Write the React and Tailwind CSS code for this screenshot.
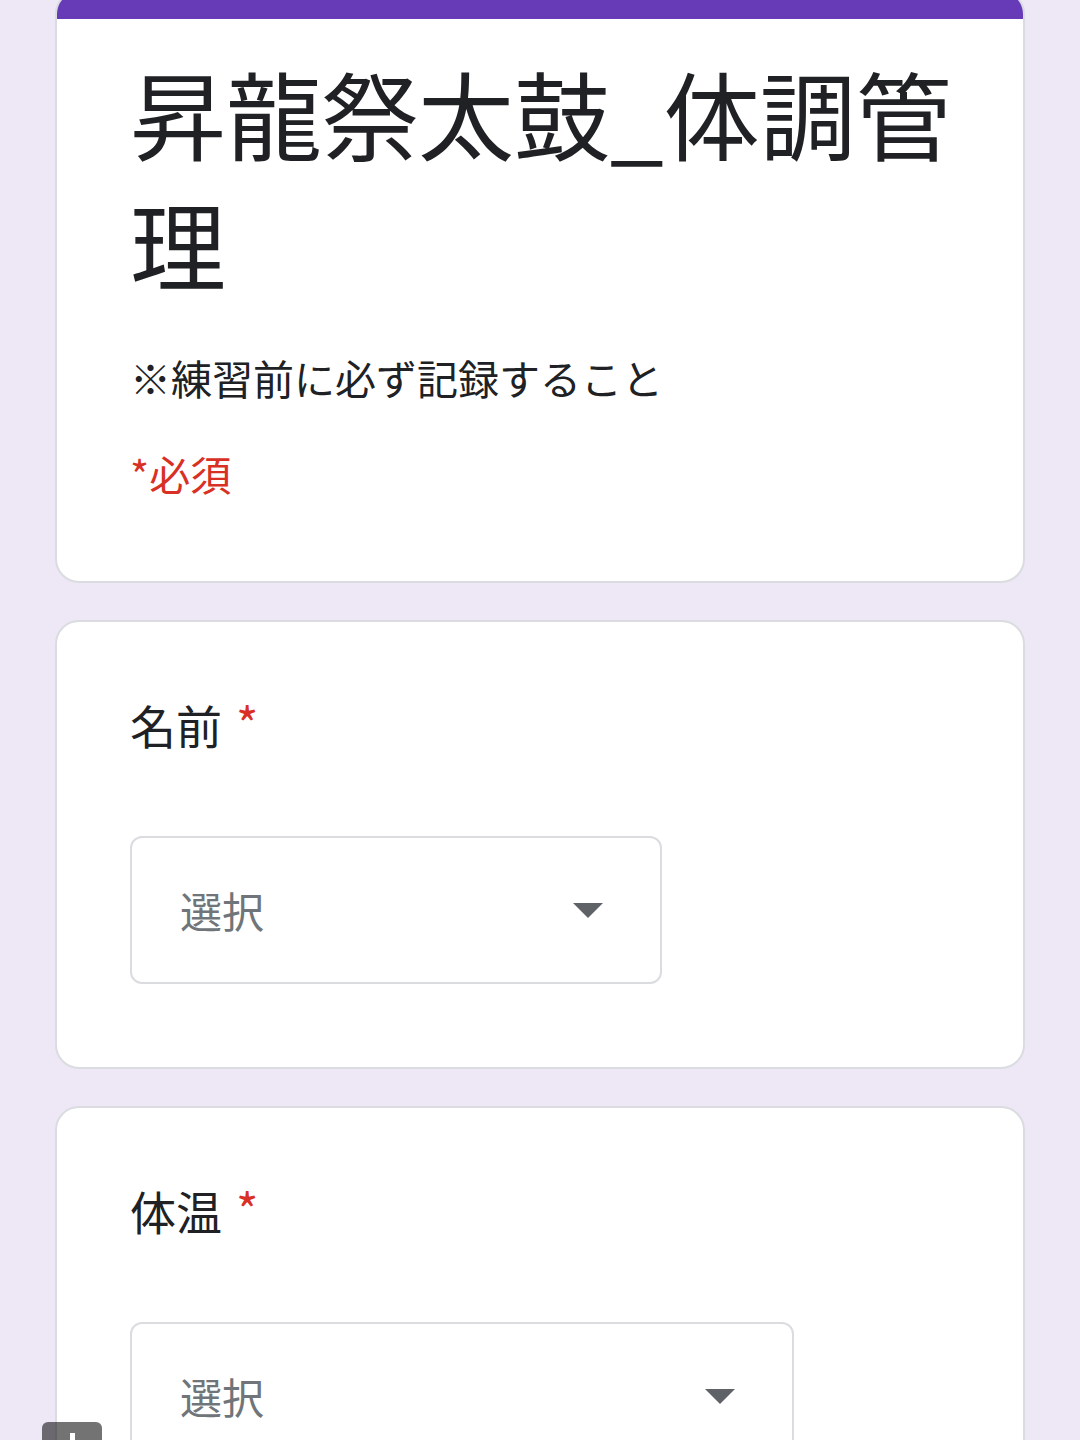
import React from 'react';

const font = { fontFamily: '"Noto Sans CJK JP", "Noto Sans", sans-serif' };

const Dropdown = ({ width }) => (
  <div className={`${width} h-[148px] border-2 border-[#dadce0] rounded-[12px] bg-white flex items-center justify-between pl-[48px] pr-[57px]`}>
    <span className="text-[42px] leading-none text-[#70757a]">選択</span>
    <svg width="30" height="15" viewBox="0 0 30 15" className="shrink-0">
      <path d="M0 0 L30 0 L15 15 Z" fill="#5f6368" />
    </svg>
  </div>
);

const Question = ({ label, width }) => (
  <div className="bg-white border-2 border-[#dadce0] rounded-[24px] pl-[73px] pr-[73px] pt-[72px] pb-[83px]">
    <div className="flex items-start text-[46px] leading-[60px] text-[#202124]">
      <span>{label}</span>
      <span className="text-[#d93025] ml-[14px] text-[48px] leading-[56px]">*</span>
    </div>
    <div className="mt-[82px]">
      <Dropdown width={width} />
    </div>
  </div>
);

export default function App() {
  return (
    <div className="min-h-[1440px] bg-[#ede7f6] px-[55px] overflow-hidden relative" style={font}>
      <div className="-mt-[10px] flex flex-col gap-[37px] pb-[60px]">
        {/* cabecera del formulario */}
        <div className="bg-white border-2 border-[#dadce0] rounded-[24px] overflow-hidden">
          <div className="h-[29px] bg-[#673ab7] -mx-[2px] -mt-[2px]" />
          <div className="pl-[73px] pr-[60px] pt-[28px] pb-[78px]">
            <h1 className="text-[96px] leading-[130px] text-[#202124] font-normal">
              昇龍祭太鼓_体調管理
            </h1>
            <p className="mt-[40px] text-[41px] leading-[60px] text-[#202124]">
              ※練習前に必ず記録すること
            </p>
            <p className="mt-[36px] text-[41px] leading-[60px] text-[#d93025]">*必須</p>
          </div>
        </div>

        <Question label="名前" width="w-[532px]" />
        <Question label="体温" width="w-[664px]" />
      </div>

      {/* boton flotante recortado */}
      <div className="absolute left-[42px] top-[1422px] w-[60px] h-[40px] rounded-[6px] bg-black/55">
        <div className="absolute left-[28px] top-[11px] w-[5px] h-[20px] bg-white" />
      </div>
    </div>
  );
}
